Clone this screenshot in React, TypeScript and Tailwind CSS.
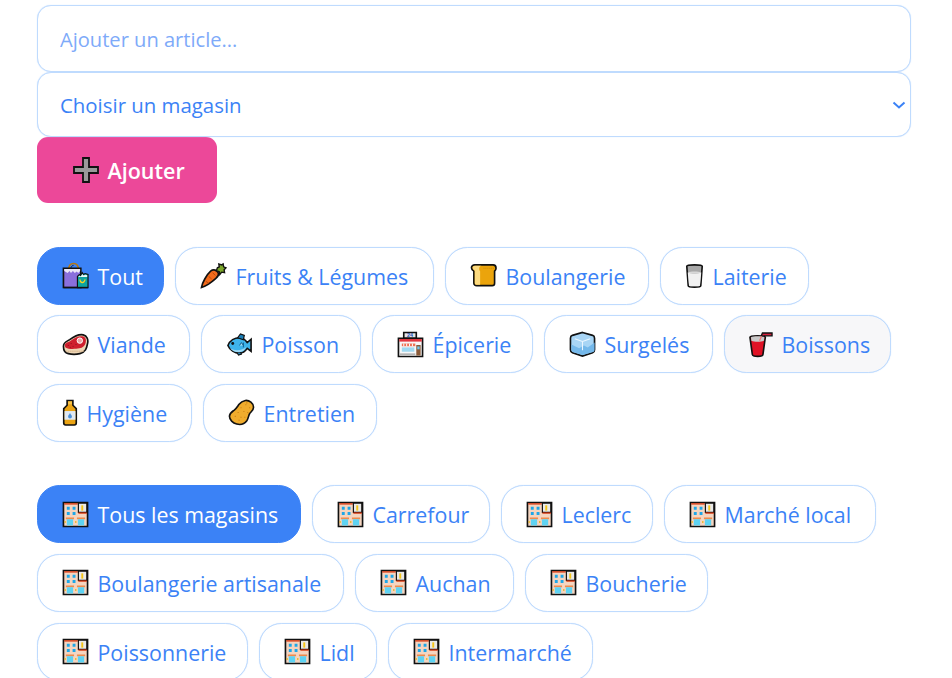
import React from "react";

const K = "#111";
const sw = 1.7;

const Bag = () => (
  <svg viewBox="0 0 28 28" className="w-full h-full">
    <path d="M7 8C7 3 9.500 1.500 12 1.500S17 3 17 8" fill="none" stroke="#b9770e" strokeWidth="1.700" />
    <path d="M9 8C9 5 10.500 3.500 12 3.500" fill="none" stroke={K} strokeWidth=".8" />
    <path d="M1.500 6.500h18v20h-18z" fill="#8a6fdc" stroke={K} strokeWidth={sw} />
    <path d="M2.300 7.300h16.500v2l-2 2-1.500-1.500-2 1.500-2-2-2 2-1.500-2-2 2-3.500-2z" fill="#ece8f8" />
    <path d="M16 15l2-2 1 1 2-3 1 2 2-1 3 1v13.500H16z" fill="#0fa3a0" stroke={K} strokeWidth="1.200" />
    <path d="M16.800 15.500l1.500-1.500 1 1 2-2.500 1 1.500 2-.8 1.800.6v1.700H16.800z" fill="#e9f7f6" />
    <path d="M18.500 18c.5 4.500 4.500 4.500 5.500 0" fill="none" stroke="#ffd21f" strokeWidth="1.100" />
    <path d="M1.500 26.500h25.500" stroke={K} strokeWidth="1.500" />
  </svg>
);

const Carrot = () => (
  <svg viewBox="0 0 28 28" className="w-full h-full">
    <path d="M1.500 26.500C2 22 7 13 11 9.500c3-2.500 7-1 8 2 .8 2.500-.5 4-2.500 5.500-4.500 4-11.500 8.500-15 9.500z" fill="#f26a1b" stroke={K} strokeWidth={sw} />
    <path d="M6 20l3 2M9 15l3 2.500M13 11l3 3" stroke="#b94a08" strokeWidth="1" fill="none" />
    <path d="M17 9l1-3 2-1-.5-3 3 1 1.500-1 .5 3 2.500 1-2 2 .5 3-3-.5-2 2.500-.5-3z" fill="#7ba62a" stroke={K} strokeWidth="1.400" />
  </svg>
);

const Bread = () => (
  <svg viewBox="0 0 28 28" className="w-full h-full">
    <path d="M5 3h19c2 0 3 1.500 3 3.500 0 1.500-1 2.500-1.500 3V22c0 1.500-1 2.500-2.500 2.500H7c-2 0-3-1-3-2.500V9.500C2.500 8.500 1.500 7.500 1.500 6c0-2 1.500-3 3.500-3z" fill="#eba40c" stroke={K} strokeWidth={sw} />
    <path d="M5 4h7c-1.500 0-2.500 1.500-2.500 3 0 1 .5 2 1 2.500V23.500H6.500c-1 0-1.500-.6-1.500-1.500V9C3.500 8 2.800 7 2.800 6c0-1 1-2 2.200-2z" fill="#fddb80" />
    <path d="M14 6.500h11" stroke="#c98a08" strokeWidth="1" strokeDasharray="1 1" />
  </svg>
);

const Milk = () => (
  <svg viewBox="5 0 18 28" className="w-full h-full">
    <path d="M6 4.500C6 2.500 22 2.500 22 4.500l-1.500 20c0 2-13 2-13 0z" fill="#a8a8a8" stroke={K} strokeWidth={sw} />
    <path d="M7 11c3 1.500 11 1.500 14 0l-1.300 13.500c-1 1-10.400 1-11.400 0z" fill="#f1f1f1" />
    <path d="M7 11c3-1.500 11-1.500 14 0-3 1.500-11 1.500-14 0z" fill="#d8d8d8" />
  </svg>
);

const Meat = () => (
  <svg viewBox="0 0 28 28" className="w-full h-full">
    <path d="M1.500 16C1.500 11 5 11 8 9c4-3 9-6 14-5 4 1 5.500 5 4.500 9-1 5-2 9-8 10.500-3 .7-9 .7-12 0-3-.7-5-3-5-7.500z" fill="#eed5b4" stroke={K} strokeWidth={sw} />
    <path d="M3 15c0-3 3-3 6-5 4-3 8-5 12-4.500 3.500.5 4.500 3.500 3.500 7-.8 3-3 5-6.500 5.500-3 .5-8 .8-11 .3-2.500-.4-4-1-4-3.300z" fill="#cf1f2e" />
    <circle cx="18.500" cy="10" r="2.800" fill="#e9a5a5" stroke="#fff" strokeWidth="1" />
    <path d="M6 15h1M9 13h1M11 16h1M14 14h1M8 17h1" stroke="#8f0f1c" strokeWidth="1" />
    <path d="M4 21h20" stroke="#c9a57c" strokeWidth="1" strokeDasharray="1 1" />
  </svg>
);

const Fish = () => (
  <svg viewBox="0 0 28 28" className="w-full h-full">
    <path d="M2 15c2-5 7-8 12-8 3 0 6 2 8 5l4-3.500v12.500l-4-3c-2 3-5 5-8 5-5 0-10-3-12-8z" fill="#3eb4ea" stroke={K} strokeWidth={sw} />
    <path d="M12 7l3-4 4 1.500L18 9z" fill="#1a7fb8" stroke={K} strokeWidth="1.200" />
    <path d="M11 22l2 3 3-1-.5-2z" fill="#1a7fb8" stroke={K} strokeWidth="1.200" />
    <path d="M3.500 17c4 4 13 4 18-1l-2 3c-2 2.500-4 3-6 3-4 0-8-2-10-5z" fill="#9ed9f5" />
    <path d="M14 15l2-3 2 3M18 12v5" fill="#a9e1f8" stroke="#0d5c8c" strokeWidth="1" />
    <circle cx="7" cy="13" r="1.500" fill={K} />
  </svg>
);

const Shop = () => (
  <svg viewBox="0 0 28 28" className="w-full h-full">
    <path d="M7 1.500h13v6H7z" fill="#e7e7e7" stroke={K} strokeWidth={sw} />
    <text x="13.500" y="6.500" fontSize="5.500" fontWeight="700" textAnchor="middle" fill="#1d4fb8" fontFamily="Liberation Sans">24</text>
    <path d="M1.500 7.500h25v19h-25z" fill="#f7f7f7" stroke={K} strokeWidth={sw} />
    <path d="M2.300 8.300h23.400v2.700H2.300z" fill="#e2363f" />
    <path d="M5 13h14v2.800H5z" fill="#ee6f52" />
    <path d="M7 13v2.800M10 13v2.800M13 13v2.800M16 13v2.800" stroke="#fff" strokeWidth="1" />
    <path d="M5 17h13v4.500H5z" fill="#9fd8f0" />
    <path d="M20 14.500h4.500v11H20z" fill="#8a5a38" />
    <path d="M21 16h2.500v3H21z" fill="#6fc4ea" />
    <path d="M3 24h16" stroke="#a8a8a8" strokeWidth="1.500" />
  </svg>
);

const Ice = () => (
  <svg viewBox="0 0 28 28" className="w-full h-full">
    <path d="M14 1.500l10.500 3c1.500.5 2 1.500 2 3v12c0 1.500-.5 2.500-2 3l-10.500 3.500L3.500 22.500c-1.500-.5-2-1.500-2-3v-12c0-1.500.5-2.500 2-3z" fill="#a8d5f5" stroke={K} strokeWidth={sw} />
    <path d="M2.500 14l8 4 5-3 4 2 7-5v7.500c0 1-.5 2-1.500 2.300L14 25 4 21.800c-1-.3-1.500-1.300-1.500-2.300z" fill="#74b8ea" />
    <path d="M14 11v9M14 11l-8-3M14 11l8-3" stroke="#eaf6ff" strokeWidth="1.100" fill="none" />
  </svg>
);

const Cup = () => (
  <svg viewBox="2 0 25 28" className="w-full h-full">
    <path d="M14 7l2-5h10v3h-8l-1.500 3.500" fill="#d61f3c" stroke={K} strokeWidth="1.400" />
    <path d="M3 6.500c0-2 16-2 16 0l-2.500 18c0 2.500-11 2.500-11 0z" fill="#e01226" stroke={K} strokeWidth={sw} />
    <path d="M4 6.500c2-1.500 12-1.500 14 0l-.5 3.500c-3 1.500-10 1.500-13 0z" fill="#c9c9c9" />
    <path d="M13 10l2-4.500" stroke="#f47070" strokeWidth="1.200" />
  </svg>
);

const Bottle = () => (
  <svg viewBox="6 0 15 28" className="w-full h-full">
    <path d="M10.500 1.500h6v5l3.500 3.500v15c0 1.200-.8 2-2 2H9c-1.200 0-2-.8-2-2V10l3.500-3.500z" fill="#eaa313" stroke={K} strokeWidth={sw} />
    <path d="M11.500 2.500h4v3h-4z" fill="#f6c24c" />
    <path d="M7.800 12.500h11.400v9H7.800z" fill="#dfe9f4" />
    <path d="M13.500 14.500c-1 2-2 2.500-2 3.700a2 2 0 004 0c0-1.200-1-1.700-2-3.700z" fill="#4a90d9" />
  </svg>
);

const Sponge = () => (
  <svg viewBox="0 0 28 28" className="w-full h-full">
    <path d="M18 1.500c4-.5 8.500 3 8.500 7 0 3-2.500 4.500-4 6.500-1.500 2.500-1 4.500-3 7.500-2.500 3.500-6.500 4.500-10.500 3.500-4-1-7.500-4.500-7.500-8 0-3.500 3-5 5-6.500 2.500-2 3.500-4 5-6 1.500-2 4-3.500 6.500-4z" fill="#f0ac2d" stroke={K} strokeWidth={sw} />
    <path d="M18 6h1M22 9h1M13 9h1M16 13h1M10 14h1M20 14h1M7 18h1M13 19h1M11 22h1M17 19h1M19 4h1" stroke="#c47d10" strokeWidth="1.100" />
  </svg>
);

const Store = () => (
  <svg viewBox="0 0 28 28" className="w-full h-full">
    <path d="M1.500 1.500h25v25h-25z" fill="#f5d5c0" stroke={K} strokeWidth={sw} />
    <path d="M2.300 2.300h14v1.400h-14z" fill="#d9360f" />
    <path d="M17 2.300h8.700v9.500H17z" fill="#e9e9e9" stroke={K} strokeWidth="1.200" />
    <path d="M20 4.500h2v5.500h-2z" fill="#f5c518" />
    <path d="M17 11.800h8.700v1.400H17z" fill="#d9360f" />
    <path d="M5 6h3v3H5zM11 6h3v3h-3zM5 11.500h3v3H5zM11 11.500h3v3h-3z" fill="#1ea7e8" />
    <path d="M4 17h8.500v2H4zM15.500 17H24v2h-8.500z" fill="#f08a4b" />
    <path d="M5 19h6.500v6.500H5zM16.500 19H23v6.500h-6.500z" fill="#5ed3f3" />
    <path d="M2.500 21h1.500v1.500H2.500zM13.500 21h1.500v1.500h-1.500z" fill="#eab308" />
  </svg>
);

const Plus = () => (
  <svg viewBox="0 0 26 26" className="w-full h-full">
    <path d="M10 1h6v9h9v6h-9v9h-6v-9H1v-6h9z" fill="#9a9a9a" stroke={K} strokeWidth="1.800" />
  </svg>
);

type Chip = { icon: React.ReactNode; label: string; w: string; iw?: string; active?: boolean; hover?: boolean };

const categories: Chip[] = [
  { icon: <Bag />, label: "Tout", w: "w-[127px]", active: true },
  { icon: <Carrot />, label: "Fruits & Légumes", w: "w-[259px]" },
  { icon: <Bread />, label: "Boulangerie", w: "w-[204px]" },
  { icon: <Milk />, label: "Laiterie", w: "w-[149px]", iw: "w-[19px]" },
  { icon: <Meat />, label: "Viande", w: "w-[153px]" },
  { icon: <Fish />, label: "Poisson", w: "w-[160px]" },
  { icon: <Shop />, label: "Épicerie", w: "w-[161px]" },
  { icon: <Ice />, label: "Surgelés", w: "w-[169px]" },
  { icon: <Cup />, label: "Boissons", w: "w-[167px]", iw: "w-[24px]", hover: true },
  { icon: <Bottle />, label: "Hygiène", w: "w-[155px]", iw: "w-[16px]" },
  { icon: <Sponge />, label: "Entretien", w: "w-[174px]" },
];

const stores: Chip[] = [
  { icon: <Store />, label: "Tous les magasins", w: "w-[264px]", active: true },
  { icon: <Store />, label: "Carrefour", w: "w-[178px]" },
  { icon: <Store />, label: "Leclerc", w: "w-[152px]" },
  { icon: <Store />, label: "Marché local", w: "w-[212px]" },
  { icon: <Store />, label: "Boulangerie artisanale", w: "w-[307px]" },
  { icon: <Store />, label: "Auchan", w: "w-[159px]" },
  { icon: <Store />, label: "Boucherie", w: "w-[183px]" },
  { icon: <Store />, label: "Poissonnerie", w: "w-[211px]" },
  { icon: <Store />, label: "Lidl", w: "w-[118px]" },
  { icon: <Store />, label: "Intermarché", w: "w-[205px]" },
];

function ChipButton({ c }: { c: Chip }) {
  const tone = c.active
    ? "bg-[#3b82f6] border-[#3b82f6] text-white"
    : c.hover
      ? "bg-[#f7f7f9] border-[#bfdbfe] text-[#3b82f6] shadow-[0_0_1px_#bfdbfe]"
      : "bg-white border-[#bfdbfe] text-[#3b82f6] shadow-[0_0_1px_#bfdbfe]";
  return (
    <button className={`${c.w} ${tone} h-[58px] rounded-[22.4px] border pl-[23.5px] flex items-center`}>
      <span className={`${c.iw ?? "w-[27px]"} h-[27px] mr-[9px] shrink-0`}>{c.icon}</span>
      <span className="whitespace-nowrap text-[21.4px] translate-y-[0.5px]">{c.label}</span>
    </button>
  );
}

export default function App() {
  return (
    <div className="h-[678px] overflow-hidden bg-white pt-[5px] pl-[37px] pr-[41px] font-['Open_Sans','Noto_Sans',sans-serif] text-[21.5px] leading-[30px]">
      <input
        placeholder="Ajouter un article..."
        className="block w-full h-[67px] rounded-[14px] border border-[#bfdbfe] shadow-[0_0_1px_#bfdbfe] bg-white px-[22px] pt-[2px] text-[20.1px] text-[#3b82f6] placeholder:text-[#7eaaf9] outline-none"
      />
      <div className="relative">
        <select className="block w-full h-[65px] appearance-none rounded-[14px] border border-[#bfdbfe] shadow-[0_0_1px_#bfdbfe] bg-white px-[22px] text-[20.4px] text-[#3b82f6] outline-none">
          <option>Choisir un magasin</option>
        </select>
        <svg viewBox="0 0 14 8" className="absolute right-[5px] top-[29px] w-[14px] h-[8px]" fill="none" stroke="#3b82f6" strokeWidth="2">
          <path d="M1.500 1.500L7 6.500l5.500-5" />
        </svg>
      </div>
      <button className="w-[180px] h-[66px] rounded-[11px] bg-[#ec4899] text-white font-semibold flex items-center pl-[35.500px]">
        <span className="w-[26px] h-[26px] mr-[9px] shrink-0"><Plus /></span>
        <span className="translate-y-[0.5px]">Ajouter</span>
      </button>
      <div className="mt-[43.7px] flex flex-wrap gap-x-[11px] gap-y-[10.6px]">
        {categories.map((c) => <ChipButton key={c.label} c={c} />)}
      </div>
      <div className="mt-[43.5px] flex flex-wrap gap-x-[11px] gap-y-[10.6px]">
        {stores.map((c) => <ChipButton key={c.label} c={c} />)}
      </div>
    </div>
  );
}
